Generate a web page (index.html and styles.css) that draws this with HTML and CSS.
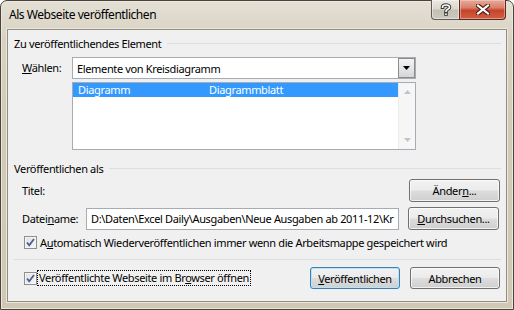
FILE: index.html
```html
<!DOCTYPE html>
<html lang="de">
<head>
<meta charset="utf-8">
<title>Als Webseite veröffentlichen</title>
<link rel="stylesheet" href="styles.css">
</head>
<body>
<div class="window">
  <div class="titlebar">
    <div class="title">Als Webseite veröffentlichen</div>
    <div class="caption">
      <div class="cap-btn help">
        <svg width="12" height="13" viewBox="0 0 12 13">
          <path d="M2.5 4.2 C2.5 1.5 9.5 1.2 9.5 4.2 C9.5 6.3 6 6.3 6 8.3" fill="none" stroke="#3a3a3a" stroke-width="3.6" stroke-linecap="square"/>
          <rect x="4.2" y="9.6" width="3.6" height="3.2" fill="#3a3a3a"/>
          <path d="M2.5 4.2 C2.5 1.5 9.5 1.2 9.5 4.2 C9.5 6.3 6 6.3 6 8.3" fill="none" stroke="#fff" stroke-width="1.6" stroke-linecap="square"/>
          <rect x="5.2" y="10.4" width="1.6" height="1.6" fill="#fff"/>
        </svg>
      </div>
      <div class="cap-btn close">
        <svg width="14" height="11" viewBox="0 0 14 11">
          <path d="M2 1.5 L12 9.5 M12 1.5 L2 9.5" stroke="#4a1c14" stroke-width="4.4" stroke-linecap="square"/>
          <path d="M2 1.5 L12 9.5 M12 1.5 L2 9.5" stroke="#fff" stroke-width="2.2" stroke-linecap="square"/>
        </svg>
      </div>
    </div>
  </div>
  <div class="client">
    <div class="group-head g1"><span>Zu veröffentlichendes Element</span><div class="rule"></div></div>
    <div class="row select-row">
      <label class="lbl lbl-w"><u>W</u>ählen:</label>
      <div class="combo">
        <span class="combo-text">Elemente von Kreisdiagramm</span>
        <div class="combo-btn">
          <svg width="7" height="4" viewBox="0 0 7 4"><path d="M0 0 H7 L3.5 4 Z" fill="#000"/></svg>
        </div>
      </div>
    </div>
    <div class="listbox">
      <div class="list-items">
        <div class="list-row selected"><span class="col1">Diagramm</span><span>Diagrammblatt</span></div>
      </div>
      <div class="vscroll">
        <svg width="7" height="4" viewBox="0 0 7 4"><path d="M0 4 H7 L3.5 0 Z" fill="#c4c4c4"/></svg>
        <svg width="7" height="4" viewBox="0 0 7 4"><path d="M0 0 H7 L3.5 4 Z" fill="#c4c4c4"/></svg>
      </div>
    </div>
    <div class="group-head g2"><span>Veröffentlichen als</span><div class="rule"></div></div>
    <div class="row titel-row">
      <span class="lbl">Titel:</span>
      <button class="btn">Änder<u>n</u>...</button>
    </div>
    <div class="row file-row">
      <label class="lbl lbl-d">Datei<u>n</u>ame:</label>
      <div class="textbox">D:\Daten\Excel Daily\Ausgaben\Neue Ausgaben ab 2011-12\Kr</div>
      <button class="btn"><u>D</u>urchsuchen...</button>
    </div>
    <div class="row check-row">
      <span class="check">
        <svg width="13" height="13" viewBox="0 0 13 13"><path d="M3 6.5 L5.2 9.2 L10 3" fill="none" stroke="#4b5e92" stroke-width="1.8"/></svg>
      </span>
      <span class="check-lbl">A<u>u</u>tomatisch Wiederveröffentlichen immer wenn die Arbeitsmappe gespeichert wird</span>
    </div>
    <div class="separator"></div>
    <div class="row bottom-row">
      <span class="check">
        <svg width="13" height="13" viewBox="0 0 13 13"><path d="M3 6.5 L5.2 9.2 L10 3" fill="none" stroke="#4b5e92" stroke-width="1.8"/></svg>
      </span>
      <span class="check-lbl focus">Veröffentlichte Webseite im Br<u>o</u>wser öffnen</span>
      <button class="btn default"><u>V</u>eröffentlichen</button>
      <button class="btn">Abbrechen</button>
    </div>
  </div>
</div>
</body>
</html>
```
FILE: styles.css
```css
* { box-sizing: border-box; }
html, body { margin: 0; padding: 0; }
body {
  width: 514px;
  height: 310px;
  overflow: hidden;
  font-family: "Noto Sans", "Open Sans", sans-serif;
  font-size: 11px;
  letter-spacing: -0.35px;
  color: #000;
}
.window {
  width: 514px;
  height: 310px;
  border: 1px solid #48443c;
  border-radius: 7px 7px 0 0;
  background: linear-gradient(180deg, #e4e0d5 0%, #d8d2c2 12%, #d1cab7 40%, #cfc8b5 100%);
  box-shadow: inset 0 0 0 1px #ece8dd;
  display: flex;
  flex-direction: column;
}
.titlebar {
  height: 28px;
  display: flex;
  align-items: flex-start;
  flex: none;
}
.title {
  padding: 5px 0 0 8px;
  font-size: 12px;
  letter-spacing: -0.45px;
  color: #000;
}
.caption {
  margin: -1px 7px 0 auto;
  display: flex;
}
.cap-btn {
  height: 20px;
  display: flex;
  align-items: center;
  justify-content: center;
  border: 1px solid #5e5b54;
  border-top: none;
}
.help {
  width: 28px;
  border-radius: 0 0 0 4px;
  border-right: none;
  background: linear-gradient(180deg, #ebe8e1 0%, #dcd8cf 45%, #c5c0b4 55%, #cdc8bd 100%);
  box-shadow: inset 0 0 0 1px rgba(255,255,255,0.45);
}
.close {
  width: 47px;
  border-radius: 0 0 4px 0;
  border-color: #5b2a1e;
  background: linear-gradient(180deg, #e7ab9c 0%, #d9806a 40%, #c7432b 55%, #d06044 100%);
  box-shadow: inset 0 0 0 1px rgba(255,220,210,0.45);
}
.client {
  flex: 1;
  margin: 0 6px 7px 6px;
  background: #f0f0f0;
  border: 1px solid #928d80;
  box-shadow: 0 0 0 1px #ebe7dc;
  display: flex;
  flex-direction: column;
}
.group-head {
  display: flex;
  align-items: center;
  height: 14px;
  padding: 0 5px 0 6px;
  white-space: nowrap;
}
.group-head .rule {
  flex: 1;
  height: 1px;
  margin-left: 6px;
  background: #d5dfe5;
}
.g1 { margin-top: 6px; }
.g2 { margin-top: 11px; }
.row {
  display: flex;
  align-items: center;
  padding: 0 6px 0 14px;
}
.lbl { white-space: nowrap; flex: none; }
.lbl-w { width: 50px; align-self: flex-start; padding-top: 3px; }
.select-row { margin-top: 7px; height: 22px; }
.combo {
  width: 344px;
  height: 22px;
  border: 1px solid #a5acb5;
  background: #fff;
  display: flex;
  align-items: center;
  padding-left: 4px;
  flex: none;
}
.combo-text { flex: 1; }
.combo-btn {
  width: 17px;
  height: 20px;
  border: 1px solid #8c8c8c;
  background: linear-gradient(180deg, #f4f4f4 0%, #e6e6e6 50%, #d6d6d6 100%);
  display: flex;
  align-items: center;
  justify-content: center;
}
.listbox {
  margin: 3px 0 0 64px;
  width: 344px;
  height: 68px;
  border: 1px solid #a5acb5;
  background: #fff;
  display: flex;
}
.list-items { flex: 1; }
.list-row {
  height: 14px;
  line-height: 14px;
  padding-left: 5px;
  white-space: nowrap;
  display: flex;
}
.list-row.selected { background: #3399ff; color: #fff; }
.col1 { width: 131px; }
.vscroll {
  width: 17px;
  background: #f6f6f6;
  border-left: 1px solid #ececec;
  display: flex;
  flex-direction: column;
  align-items: center;
  justify-content: space-between;
  padding: 7px 0 7px;
}
.titel-row { margin-top: 4px; height: 23px; justify-content: space-between; }
.file-row { margin-top: 5px; height: 23px; }
.lbl-d { width: 64px; }
.textbox {
  width: 313px;
  height: 22px;
  border: 1px solid #a5acb5;
  background: #fff;
  line-height: 20px;
  padding-left: 4px;
  white-space: nowrap;
  overflow: hidden;
  margin-right: 9px;
  flex: none;
}
.btn {
  font: inherit;
  letter-spacing: inherit;
  color: #000;
  width: 91px;
  height: 23px;
  padding: 0;
  flex: none;
  border: 1px solid #707070;
  border-radius: 3px;
  background: linear-gradient(180deg, #f2f2f2 0%, #ebebeb 48%, #dddddd 52%, #cfcfcf 100%);
  box-shadow: inset 0 0 0 1px rgba(255,255,255,0.7);
}
.btn.default {
  border-color: #3c7fb1;
  box-shadow: inset 0 0 0 1px #b8e4f8;
  margin-left: auto;
  margin-right: 10px;
}
.check-row { margin-top: 6px; height: 13px; padding-left: 16px; }
.check {
  width: 13px;
  height: 13px;
  border: 1px solid #8e8f8f;
  background: linear-gradient(135deg, #e0e0e0 0%, #f8f8f8 100%);
  box-shadow: inset 0 0 0 1px #f4f4f4;
  display: flex;
  align-items: center;
  justify-content: center;
  flex: none;
}
.check svg { margin: -1px; }
.check-lbl { margin-left: 3px; white-space: nowrap; }
.separator {
  margin: 10px 5px 0 6px;
  height: 1px;
  background: #d5dfe5;
}
.bottom-row { margin-top: 7px; height: 22px; padding-left: 16px; }
.bottom-row .btn { height: 22px; width: 90px; }
.focus {
  margin-left: 1px;
  outline: 1px dotted #000;
  padding: 0 1px;
  line-height: 14px;
}
u { text-decoration: underline; text-underline-offset: 1px; }
```
